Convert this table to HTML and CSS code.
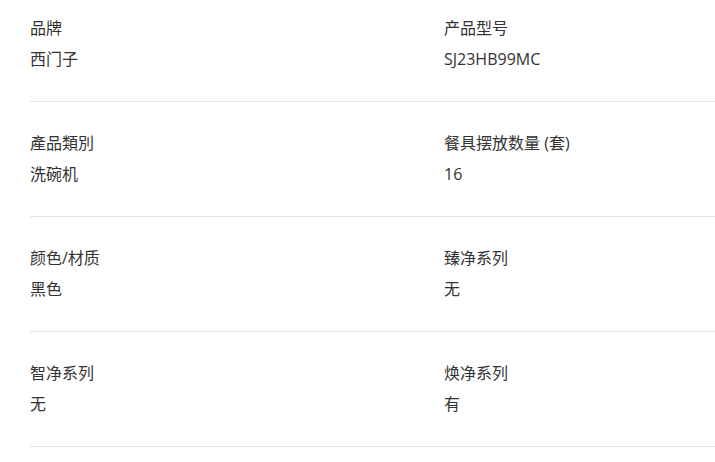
FILE: index.html
```html
<!DOCTYPE html>
<html lang="zh-CN">
<head>
<meta charset="utf-8">
<link rel="stylesheet" href="styles.css">
</head>
<body>
<div class="specs">
  <div class="row">
    <div class="item"><div class="label">品牌</div><div class="value">西门子</div></div>
    <div class="item"><div class="label">产品型号</div><div class="value">SJ23HB99MC</div></div>
  </div>
  <div class="row">
    <div class="item"><div class="label">產品類別</div><div class="value">洗碗机</div></div>
    <div class="item"><div class="label">餐具摆放数量 (套)</div><div class="value">16</div></div>
  </div>
  <div class="row">
    <div class="item"><div class="label">颜色/材质</div><div class="value">黑色</div></div>
    <div class="item"><div class="label">臻净系列</div><div class="value">无</div></div>
  </div>
  <div class="row">
    <div class="item"><div class="label">智净系列</div><div class="value">无</div></div>
    <div class="item"><div class="label">焕净系列</div><div class="value">有</div></div>
  </div>
</div>
</body>
</html>
```
FILE: styles.css
```css
html, body {
  margin: 0;
  padding: 0;
  background: #fff;
}
body {
  font-family: "Open Sans", "Noto Sans CJK SC", sans-serif;
  font-size: 16px;
  color: #333;
}
.specs {
  margin-left: 30px;
}
.row {
  display: grid;
  grid-template-columns: 414px 1fr;
  padding: 31px 0 32px;
  border-bottom: 1px solid #e5e5e5;
}
.row:first-child {
  padding-top: 18px;
}
.label, .value {
  line-height: 20px;
  white-space: nowrap;
}
.value {
  margin-top: 11px;
}
```
